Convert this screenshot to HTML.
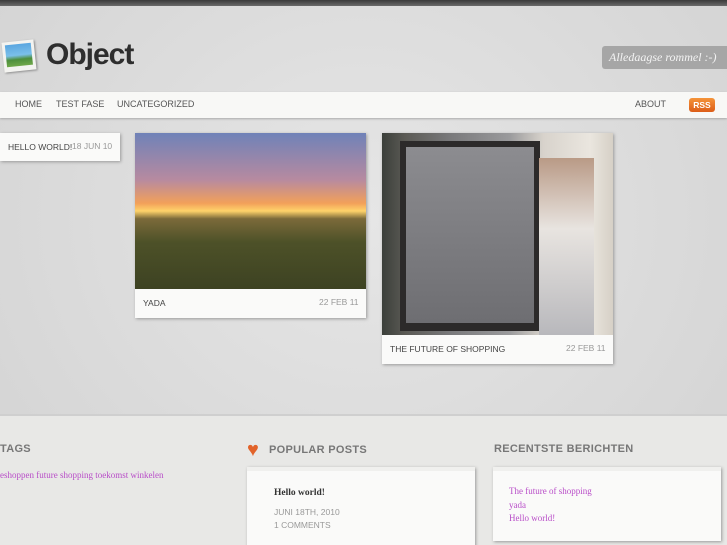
<!DOCTYPE html>
<html><head><style>
*{margin:0;padding:0;box-sizing:border-box}
html,body{width:727px;height:545px;overflow:hidden}
body{position:relative;font-family:"Liberation Sans",sans-serif;background:radial-gradient(ellipse at 50% 40%,#e6e6e6 0%,#dadada 60%,#d2d2d2 100%)}
.abs{position:absolute}
.top{left:0;top:0;width:727px;height:6px;background:linear-gradient(#3a3a3a,#6a6a6a)}
.logo{left:46px;top:38px;font-size:30px;font-weight:bold;color:#2e2e2e;letter-spacing:-1px}
.tag{left:602px;top:46px;width:125px;height:23px;background:#a6a6a6;color:#f4f4f4;font-family:"Liberation Serif",serif;font-style:italic;font-size:12px;line-height:23px;padding-left:7px;border-radius:3px 0 0 3px;white-space:nowrap;overflow:hidden}
.nav{left:0;top:92px;width:727px;height:26px;background:#f8f8f6;box-shadow:0 1px 2px #aaa;font-size:9px;color:#555;line-height:25px}
.nav span{position:absolute}
.rss{left:689px;top:98px;width:26px;height:14px;background:linear-gradient(#f5943a,#dc5d18);border-radius:3px;color:#fff;font-size:8.5px;font-weight:bold;text-align:center;line-height:14px}
.card{background:#fafaf9;box-shadow:1px 1px 3px #999}
.cap{font-size:8.5px;color:#444;position:absolute}
.date{font-size:8.5px;color:#999;position:absolute}
.foot{left:0;top:414px;width:727px;height:131px;background:#e8e8e6;border-top:2px solid #cfcfcf;overflow:hidden}
h3{position:absolute;font-size:11px;color:#777;font-weight:bold;letter-spacing:.3px}
.serif{font-family:"Liberation Serif",serif}
</style></head><body>
<div class="abs top"></div>
<div class="abs" style="left:3px;top:41px;width:32px;height:30px;background:#f3f3f0;transform:rotate(-6deg);box-shadow:1px 1px 2px #888"><div style="margin:3px;height:22px;background:linear-gradient(#5aa6e0 0%,#7bc0ea 50%,#4d8f3c 70%,#6fa84a 100%)"></div></div>
<div class="abs logo">Object</div>
<div class="abs tag">Alledaagse rommel :-)</div>
<div class="abs nav"><span style="left:15px">HOME</span><span style="left:56px">TEST FASE</span><span style="left:117px">UNCATEGORIZED</span><span style="left:635px">ABOUT</span></div>
<div class="abs rss">RSS</div>
<div class="abs card" style="left:0;top:133px;width:120px;height:28px"><span class="cap" style="left:8px;top:9px">HELLO WORLD!</span><span class="date" style="left:72px;top:8px">18 JUN 10</span></div>
<div class="abs card" style="left:135px;top:133px;width:231px;height:185px">
<div style="height:156px;background:linear-gradient(#6f82b8 0%,#b78aa0 30%,#f2a05a 45%,#ffd36a 50%,#7b6a3a 55%,#4d5128 70%,#3d4222 100%)"></div>
<span class="cap" style="left:8px;top:165px">YADA</span><span class="date" style="left:184px;top:164px">22 FEB 11</span></div>
<div class="abs card" style="left:382px;top:133px;width:231px;height:231px">
<div style="height:202px;background:linear-gradient(90deg,#3b3f3a 0%,#5b5a55 10%,#7a7a7c 30%,#9a9a9c 55%,#d8d3cc 70%,#eae6df 90%,#d6d0c6 100%);position:relative">
<div style="position:absolute;left:18px;top:8px;width:140px;height:190px;background:#2c2a2a"><div style="margin:6px;height:176px;background:linear-gradient(#8c8c90,#6e6e72)"></div></div>
<div style="position:absolute;left:157px;top:25px;width:55px;height:177px;background:linear-gradient(#b99a86,#e8e4e0 40%,#b8b8bc)"></div></div>
<span class="cap" style="left:8px;top:211px">THE FUTURE OF SHOPPING</span><span class="date" style="left:184px;top:210px">22 FEB 11</span></div>
<div class="abs foot">
<h3 style="left:0;top:27px">TAGS</h3>
<div class="abs serif" style="left:0;top:54px;font-size:9px;color:#b84cc8">eshoppen future shopping toekomst winkelen</div>
<div class="abs" style="left:247px;top:26px;width:17px;height:16px;color:#e2632a;font-size:20px;line-height:16px">♥</div>
<h3 style="left:269px;top:28px">POPULAR POSTS</h3>
<div class="abs card" style="left:247px;top:51px;width:228px;height:90px;border-top:4px solid #f0f0ee"></div>
<div class="abs serif" style="left:274px;top:72px;font-size:9.5px;font-weight:bold;color:#333">Hello world!</div>
<div class="abs" style="left:274px;top:90px;font-size:8.5px;color:#999;line-height:13px">JUNI 18TH, 2010<br>1 COMMENTS</div>
<h3 style="left:494px;top:27px">RECENTSTE BERICHTEN</h3>
<div class="abs card" style="left:493px;top:51px;width:228px;height:74px;border-top:4px solid #f0f0ee"></div>
<div class="abs serif" style="left:509px;top:69px;font-size:9px;color:#b84cc8;line-height:13.5px">The future of shopping<br>yada<br>Hello world!</div>
</div>
</body></html>
